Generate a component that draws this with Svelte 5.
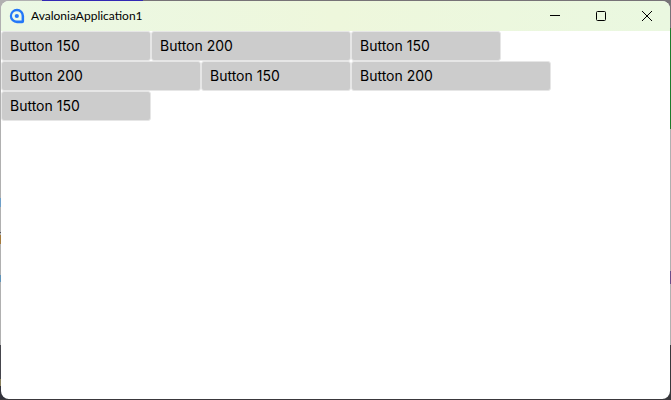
<script>
  const widths = [150, 200, 150, 200, 150, 200, 150];
</script>

<div class="desktop">
  <main class="window">
    <header class="titlebar">
      <svg class="logo" width="16" height="16" viewBox="0 0 16 16" aria-hidden="true">
        <path d="M8 .8a7.2 7.2 0 1 0 0 14.4h5.2a1.9 1.9 0 0 0 1.9-1.9V8A7.2 7.2 0 0 0 8 .8z" fill="#2478f8" />
        <path d="M3 8a4.8 4.8 0 0 1 9.6 0v4.6H8A4.8 4.8 0 0 1 3 8z" fill="#edf9e8" />
        <circle cx="7.8" cy="8" r="2.1" fill="#2478f8" />
      </svg>
      <h1>AvaloniaApplication1</h1>
      <nav class="controls" aria-label="Window">
        <button aria-label="Minimize">
          <svg width="10" height="10" viewBox="0 0 10 10"><path d="M0 4.5h10" /></svg>
        </button>
        <button aria-label="Maximize">
          <svg width="10" height="10" viewBox="0 0 10 10"><rect x=".5" y=".5" width="9" height="9" rx="1" /></svg>
        </button>
        <button aria-label="Close">
          <svg width="10" height="10" viewBox="0 0 10 10"><path d="M0 0l10 10M10 0L0 10" /></svg>
        </button>
      </nav>
    </header>
    <section class="wrap-panel">
      {#each widths as width}
        <button class="item" style="width: {width}px">Button {width}</button>
      {/each}
    </section>
  </main>
</div>

<style>
  :global(body) {
    margin: 0;
  }

  .desktop {
    box-sizing: border-box;
    min-height: 100vh;
    padding: 1px;
    display: flex;
    background:
      linear-gradient(#3228b4, #3228b4) 42px 0 / 101px 1px no-repeat,
      linear-gradient(#777377, #777377) 143px 0 / 100% 1px no-repeat,
      linear-gradient(#3a383c, #3a383c) 0 100% / 100% 1px no-repeat,
      linear-gradient(transparent 198px, #6d9fc8 198px 207px, transparent 207px 232px, #55555c 232px 233px,
        transparent 233px 235px, #a47a3c 235px 244px, transparent 244px 275px, #5f93b8 275px 282px,
        transparent 282px 345px, #45454c 345px 379px, #88805c 379px 386px, #33333c 386px) 0 0 / 8px 100% no-repeat,
      linear-gradient(#777377 28px, #1f7a2b 28px 129px, transparent 129px 271px, #6a4d88 271px 284px,
        transparent 284px 345px, #38383c 345px) 100% 0 / 8px 100% no-repeat,
      #b0b0b0;
  }

  .window {
    flex: 1;
    display: flex;
    flex-direction: column;
    overflow: hidden;
    border-radius: 8px;
    background: #fff;
  }

  .titlebar {
    display: flex;
    align-items: center;
    height: 30px;
    padding-left: 8px;
    background: linear-gradient(90deg, #ebf8e4, #eef7dc 50%, #eaf8e0);
  }

  .logo {
    flex: none;
    margin-right: 6px;
  }

  h1 {
    flex: 1;
    margin: 0;
    font: 400 12px/16px Lato, "Open Sans", sans-serif;
    color: #000;
  }

  .controls {
    display: flex;
    align-self: stretch;
  }

  .controls button {
    display: flex;
    align-items: center;
    justify-content: center;
    width: 46px;
    padding: 0;
    border: 0;
    background: none;
  }

  .controls svg {
    fill: none;
    stroke: #000;
    stroke-width: 1;
  }

  .wrap-panel {
    display: flex;
    flex-wrap: wrap;
    align-content: flex-start;
  }

  .item {
    box-sizing: border-box;
    height: 30px;
    padding: 0 8px;
    border: 1px solid #e6e6e6;
    border-radius: 3px;
    background: #ccc;
    font: 400 14px/20px Inter, sans-serif;
    color: #000;
    text-align: left;
  }
</style>
